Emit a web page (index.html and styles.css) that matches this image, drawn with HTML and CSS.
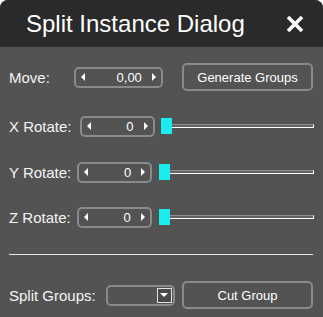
FILE: index.html
```html
<!DOCTYPE html>
<html>
<head>
<meta charset="utf-8">
<link rel="stylesheet" href="styles.css">
</head>
<body>
<div class="dialog">
  <div class="titlebar">
    <span class="title">Split Instance Dialog</span>
    <svg class="close" width="20" height="20" viewBox="0 0 20 20"><path d="M3 3 L17 17 M17 3 L3 17" stroke="#fff" stroke-width="3.6" stroke-linecap="butt"/></svg>
  </div>
  <div class="content">
    <div class="row row-move">
      <span class="label">Move:</span>
      <div class="spin spin-move">
        <span class="arr-l"></span><span class="val">0,00</span><span class="arr-r"></span>
      </div>
      <button class="btn">Generate Groups</button>
    </div>
    <div class="row row-x">
      <span class="label">X Rotate:</span>
      <div class="spin spin-rot">
        <span class="arr-l"></span><span class="val">0</span><span class="arr-r"></span>
      </div>
      <div class="slider"><div class="track"></div><div class="handle"></div></div>
    </div>
    <div class="row row-y">
      <span class="label">Y Rotate:</span>
      <div class="spin spin-rot">
        <span class="arr-l"></span><span class="val">0</span><span class="arr-r"></span>
      </div>
      <div class="slider"><div class="track"></div><div class="handle"></div></div>
    </div>
    <div class="row row-z">
      <span class="label">Z Rotate:</span>
      <div class="spin spin-rot">
        <span class="arr-l"></span><span class="val">0</span><span class="arr-r"></span>
      </div>
      <div class="slider"><div class="track"></div><div class="handle"></div></div>
    </div>
    <div class="sep"></div>
    <div class="row row-bottom">
      <span class="label">Split Groups:</span>
      <div class="combo"><span class="combo-btn"><span class="down"></span></span></div>
      <button class="btn btn-cut">Cut Group</button>
    </div>
  </div>
</div>
</body>
</html>
```
FILE: styles.css
```css
html, body {
  margin: 0;
  padding: 0;
  background: #ffffff;
}
.dialog {
  width: 323px;
  height: 317px;
  background: #535353;
  border-radius: 8px 8px 0 0;
  overflow: hidden;
  font-family: "Liberation Sans", Arial, sans-serif;
  color: #f4f4f4;
}
.titlebar {
  height: 47px;
  background: #2a2a2a;
  display: flex;
  align-items: center;
  padding: 0 18px 0 26px;
}
.title {
  font-size: 24px;
  color: #ffffff;
  line-height: 47px;
  flex: 1;
}
.close {
  display: block;
  margin-top: 0px;
}
.content {
  padding: 0 10px 0 9px;
}
.row {
  display: flex;
  align-items: center;
  height: 28px;
}
.row-move { margin-top: 16px; }
.row-x { margin-top: 21px; }
.row-y { margin-top: 18px; }
.row-z { margin-top: 17px; }
.label {
  font-size: 15px;
  white-space: nowrap;
}
.spin {
  box-sizing: border-box;
  height: 21px;
  border: 2px solid #8a8a8a;
  border-radius: 5px;
  display: flex;
  align-items: center;
  padding: 0 5px 0 5px;
}
.spin-move {
  width: 89px;
  margin-left: 24px;
}
.spin-rot {
  width: 75px;
  margin-left: 8px;
}
.row-y .spin-rot, .row-z .spin-rot { margin-left: 6px; }
.val {
  flex: 1;
  text-align: right;
  font-size: 13px;
  padding-right: 10px;
  color: #ffffff;
}
.arr-l, .arr-r {
  width: 0;
  height: 0;
  border-top: 4px solid transparent;
  border-bottom: 4px solid transparent;
}
.arr-l { border-right: 4px solid #ffffff; }
.arr-r { border-left: 4px solid #ffffff; }
.btn {
  box-sizing: border-box;
  margin-left: auto;
  width: 131px;
  height: 28px;
  background: transparent;
  border: 2px solid #8a8a8a;
  border-radius: 5px;
  color: #ffffff;
  font-family: "Liberation Sans", Arial, sans-serif;
  font-size: 13px;
  padding: 0;
}
.slider {
  position: relative;
  flex: 1;
  height: 16px;
  margin-left: 6px;
  margin-right: -1px;
  display: flex;
  align-items: center;
}
.row-y .slider, .row-z .slider { margin-left: 7px; }
.track {
  box-sizing: border-box;
  width: 100%;
  height: 4px;
  border-top: 1px solid #8e8e8e;
  border-bottom: 1px solid #ffffff;
  border-right: 1px solid #ffffff;
  background: #626262;
}
.handle {
  position: absolute;
  left: 0;
  top: 0;
  width: 11px;
  height: 16px;
  background: #19eded;
}
.sep {
  margin-top: 23px;
  height: 1px;
  background: #e6e6e6;
}
.row-bottom { margin-top: 26px; }
.combo {
  box-sizing: border-box;
  width: 69px;
  height: 21px;
  margin-left: 10px;
  border: 2px solid #8a8a8a;
  border-radius: 5px;
  display: flex;
  justify-content: flex-end;
  align-items: center;
  padding-right: 1px;
}
.combo-btn {
  box-sizing: border-box;
  width: 15px;
  height: 15px;
  border: 1px solid #e0e0e0;
  background: #4a4a4a;
  display: flex;
  align-items: center;
  justify-content: center;
}
.down {
  width: 0;
  height: 0;
  border-left: 4px solid transparent;
  border-right: 4px solid transparent;
  border-top: 4px solid #ffffff;
}
.btn-cut { width: 131px; }
```
